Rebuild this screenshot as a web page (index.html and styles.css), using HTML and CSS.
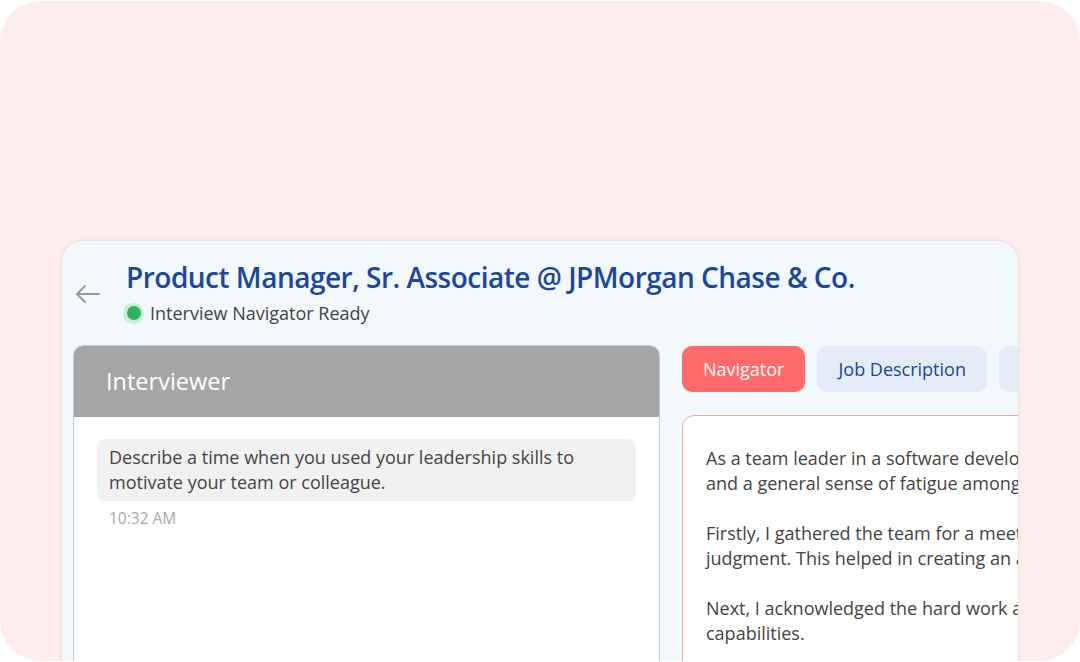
FILE: index.html
```html
<!DOCTYPE html>
<html lang="en">
<head>
  <meta charset="UTF-8">
  <meta name="viewport" content="width=device-width, initial-scale=1.0">
  <title>Interview Navigator</title>
  <link rel="stylesheet" href="styles.css">
</head>
<body>
  <div class="frame">
    <div class="window">
      <!-- header: back arrow, job title, status -->
      <div class="header">
        <svg class="back" width="24" height="24" viewBox="0 0 24 24" fill="none" stroke="#9a9a9a" stroke-width="1.8" stroke-linecap="round" stroke-linejoin="round">
          <path d="M23 12H1"/>
          <path d="M9 4L1 12l8 8"/>
        </svg>
        <div class="titles">
          <h1>Product Manager, Sr. Associate @ JPMorgan Chase &amp; Co.</h1>
          <div class="status">
            <span class="dot"></span>
            <span>Interview Navigator Ready</span>
          </div>
        </div>
      </div>

      <div class="content">
        <!-- left: interviewer chat -->
        <div class="chat">
          <div class="chat-head">Interviewer</div>
          <div class="chat-body">
            <div class="bubble">Describe a time when you used your leadership skills to motivate your team or colleague.</div>
            <div class="time">10:32 AM</div>
          </div>
        </div>

        <!-- right: tabs and answer -->
        <div class="side">
          <div class="tabs">
            <button class="tab active">Navigator</button>
            <button class="tab">Job Description</button>
            <button class="tab">Resume</button>
          </div>
          <div class="answer">
            <p>As a team leader in a software development firm, I noticed a dip in productivity<br>and a general sense of fatigue among the team members after a long release cycle.</p>
            <p>Firstly, I gathered the team for a meeting where everyone could speak without<br>judgment. This helped in creating an atmosphere of trust and openness.</p>
            <p>Next, I acknowledged the hard work and dedication of each member and their unique<br>capabilities.</p>
          </div>
        </div>
      </div>
    </div>
  </div>
</body>
</html>
```

FILE: styles.css
```css
* {
  box-sizing: border-box;
}
html, body {
  margin: 0;
  padding: 0;
  background: #fff;
  overflow: hidden;
}
body {
  font-family: 'Open Sans', 'Noto Sans', sans-serif;
}
.frame {
  margin-top: 1px;
  height: 660px;
  background: #fdeeed;
  border-radius: 40px;
  padding: 240px 62px 0 62px;
}
.window {
  height: 421px;
  background: #f3f8fd;
  border-radius: 20px 20px 0 0;
  box-shadow: 0 0 3px rgba(0,0,0,0.14);
  overflow: hidden;
  padding: 18px 0 0 0;
}
.header {
  display: flex;
  align-items: center;
  padding-left: 14px;
}
.back {
  flex: none;
  margin-top: 4px;
  margin-right: 26px;
}
.titles h1 {
  margin: 0;
  font-size: 28px;
  line-height: 36px;
  font-weight: 600;
  letter-spacing: -0.5px;
  color: #1b479d;
  white-space: nowrap;
}
.status {
  display: flex;
  align-items: center;
  gap: 6px;
  margin-left: -3px;
  height: 24px;
  margin-top: 6px;
  font-size: 18px;
  color: #444;
}
.dot {
  width: 21px;
  height: 21px;
  border-radius: 50%;
  background: #c9eed4;
  display: flex;
  align-items: center;
  justify-content: center;
}
.dot::after {
  content: "";
  width: 14px;
  height: 14px;
  border-radius: 50%;
  background: #2db35b;
}
.content {
  display: flex;
  gap: 22px;
  margin-top: 20px;
  padding-left: 11px;
}
.chat {
  flex: none;
  width: 587px;
  height: 420px;
  border: 1px solid #c9c9c9;
  border-radius: 10px 10px 0 0;
  background: #fff;
  overflow: hidden;
}
.chat-head {
  background: #a5a5a5;
  height: 71px;
  padding-left: 32px;
  display: flex;
  align-items: center;
  padding-bottom: 2px;
  font-size: 23.5px;
  color: #fff;
}
.chat-body {
  padding: 22px 23px;
}
.bubble {
  background: #f1f1f1;
  border-radius: 8px;
  padding: 6px 12px;
  font-size: 18px;
  line-height: 25px;
  color: #444;
}
.time {
  margin-top: 7px;
  padding-left: 12px;
  font-size: 15.5px;
  line-height: 20px;
  color: #aaa;
}
.side {
  flex: none;
  width: 600px;
  padding-top: 1px;
}
.tabs {
  display: flex;
  gap: 12px;
}
.tab {
  height: 46px;
  padding: 0 21px;
  border: none;
  border-radius: 10px;
  background: #e4ecf7;
  color: #1b479d;
  font-family: inherit;
  font-size: 18px;
  cursor: pointer;
}
.tab.active {
  background: #ff6b6b;
  color: #fff;
}
.answer {
  margin-top: 23px;
  height: 400px;
  background: #fff;
  border: 1px solid #f7a3a3;
  border-radius: 12px 12px 0 0;
  padding: 18px 24px 18px 23px;
  font-size: 18px;
  line-height: 25px;
  color: #444;
}
.answer p {
  margin: 12px 0 25px;
  white-space: nowrap;
}
```
